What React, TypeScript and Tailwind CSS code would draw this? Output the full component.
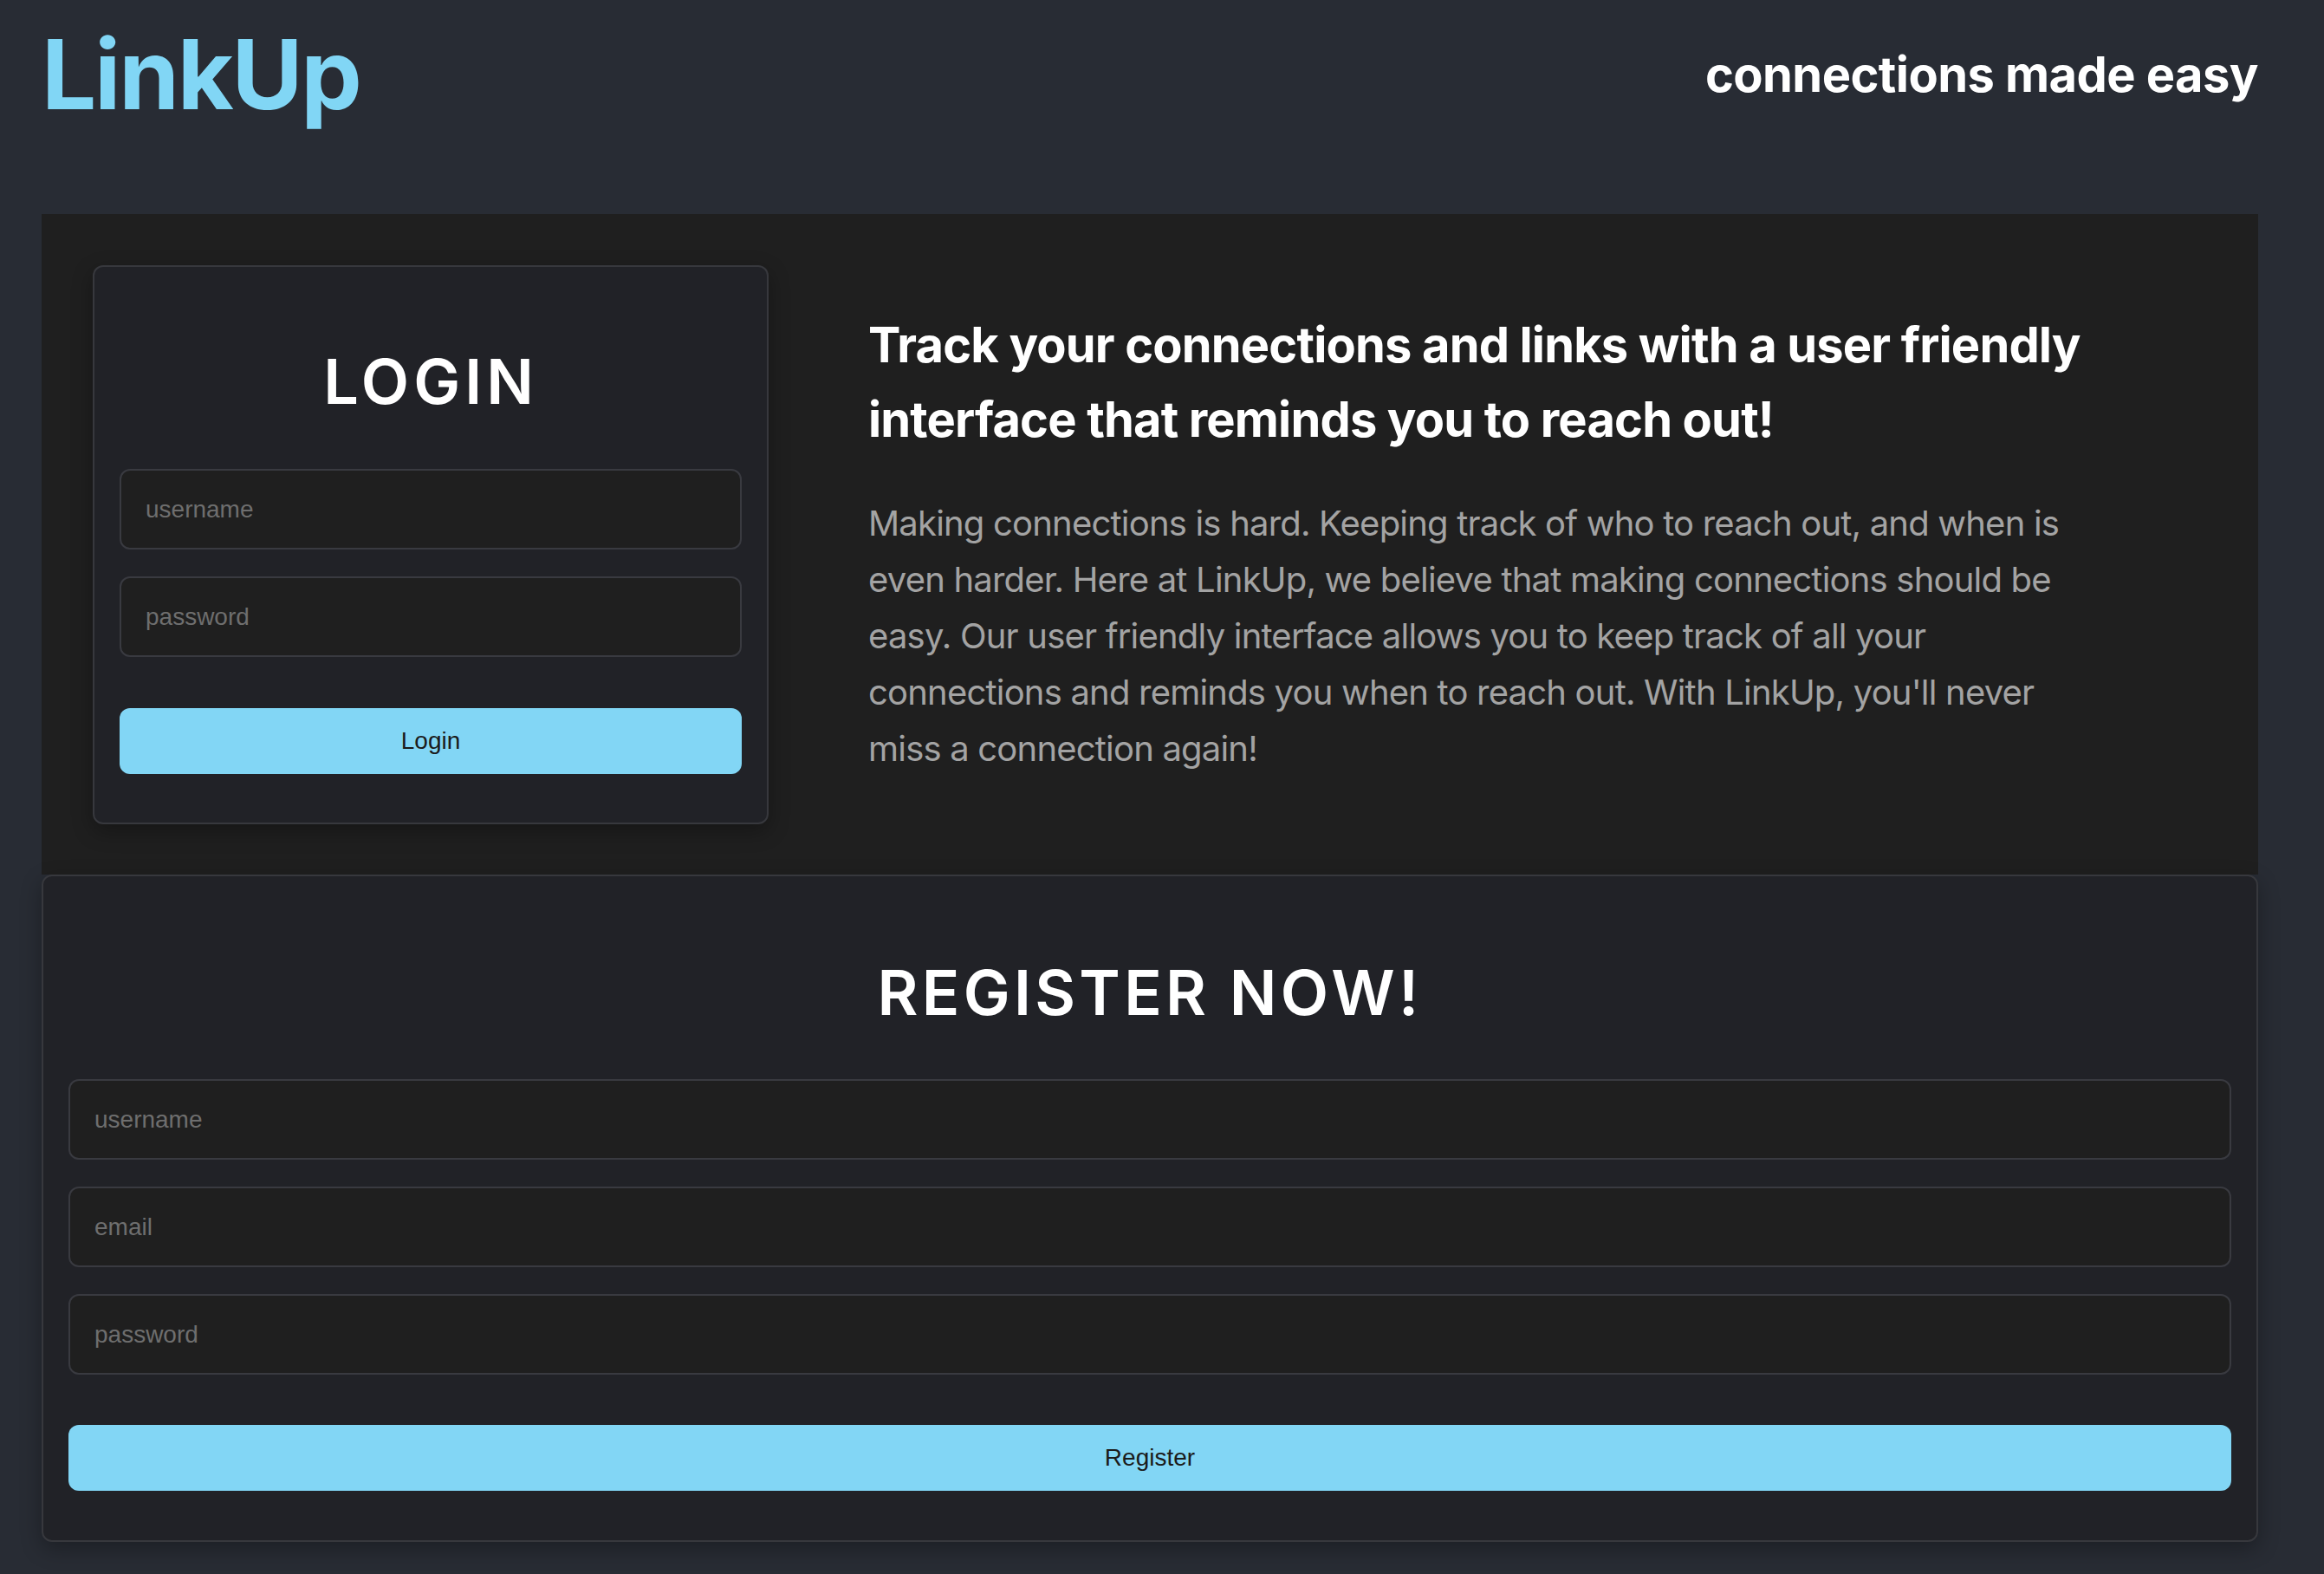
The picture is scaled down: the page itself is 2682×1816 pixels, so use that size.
import React from 'react';

const inputClass =
  'h-[93px] w-full rounded-[12px] border-2 border-[#393a40] bg-[#1f1f1f] px-[28px] text-[28px] text-white outline-none placeholder:text-[#6e6e6e] font-["Liberation_Sans",Arial,sans-serif]';

const buttonClass =
  'h-[76px] w-full rounded-[12px] bg-[#82d6f5] text-[28px] text-[#1b1b1b] font-["Liberation_Sans",Arial,sans-serif]';

function LoginCard() {
  return (
    <div className="flex w-[780px] shrink-0 flex-col rounded-[12px] border-2 border-[#37383d] bg-[#212227] px-[29px] pt-[89px] pb-[56px] shadow-[0_8px_24px_rgba(0,0,0,0.3)]">
      <h2 className="text-center text-[72px] leading-[86px] font-semibold tracking-[0.07em] text-white">LOGIN</h2>
      <div className="mt-[58px] flex flex-col gap-[31px]">
        <input className={inputClass} placeholder="username" />
        <input className={inputClass} placeholder="password" type="password" />
      </div>
      <button className={`mt-[59px] ${buttonClass}`}>Login</button>
    </div>
  );
}

function RegisterCard() {
  return (
    <div className="flex flex-col rounded-[12px] border-2 border-[#37383d] bg-[#212227] px-[29px] pt-[91px] pb-[57px] shadow-[0_8px_24px_rgba(0,0,0,0.3)]">
      <h2 className="text-center text-[72px] leading-[86px] font-semibold tracking-[0.06em] text-white">REGISTER NOW!</h2>
      <div className="mt-[57px] flex flex-col gap-[31px]">
        <input className={inputClass} placeholder="username" />
        <input className={inputClass} placeholder="email" />
        <input className={inputClass} placeholder="password" type="password" />
      </div>
      <button className={`mt-[58px] ${buttonClass}`}>Register</button>
    </div>
  );
}

export default function App() {
  return (
    <div className="min-h-screen bg-[#282c34] pl-[48px] pr-[76px] font-['Inter',sans-serif]">
      {/* header */}
      <header className="flex h-[247px] items-start justify-between">
        <h1 className="mt-[29px] text-[112px] leading-[112px] font-bold tracking-[-0.02em] text-[#81d6f5]">LinkUp</h1>
        <h2 className="mt-[58px] text-[56px] leading-[56px] font-bold tracking-[-0.01em] text-white">connections made easy</h2>
      </header>

      {/* intro + login */}
      <section className="flex items-start bg-[#1f1f1f] p-[59px] pr-[60px] pb-[58px]">
        <LoginCard />
        <div className="mt-[49px] ml-[115px] w-[1410px]">
          <h3 className="text-[56px] leading-[86px] font-bold tracking-[-0.015em] text-white">
            Track your connections and links with a user friendly interface that reminds you to reach out!
          </h3>
          <p className="mt-[44px] text-[40px] leading-[65px] tracking-[-0.02em] text-[#a3a3a3]">
            Making connections is hard. Keeping track of who to reach out, and when is even harder. Here at
            LinkUp, we believe that making connections should be easy. Our user friendly interface allows you to
            keep track of all your connections and reminds you when to reach out. With LinkUp, you'll never miss a
            connection again!
          </p>
        </div>
      </section>

      <RegisterCard />
    </div>
  );
}
